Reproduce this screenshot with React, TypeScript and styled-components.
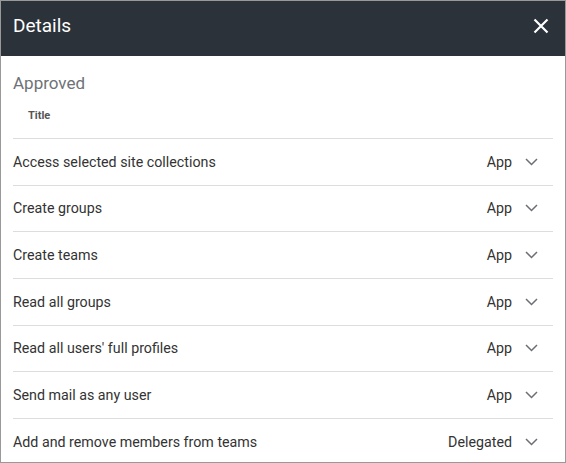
import styled, { createGlobalStyle } from "styled-components";

interface Permission {
  title: string;
  type: string;
}

const permissions: Permission[] = [
  { title: "Access selected site collections", type: "App" },
  { title: "Create groups", type: "App" },
  { title: "Create teams", type: "App" },
  { title: "Read all groups", type: "App" },
  { title: "Read all users' full profiles", type: "App" },
  { title: "Send mail as any user", type: "App" },
  { title: "Add and remove members from teams", type: "Delegated" },
];

const GlobalStyle = createGlobalStyle`
  html, body {
    margin: 0;
    padding: 0;
    background: #ffffff;
  }
  body {
    font-family: Roboto, "Liberation Sans", Arial, sans-serif;
  }
`;

const Panel = styled.div({
  width: 566,
  height: 463,
  boxSizing: "border-box",
  border: "1px solid #999999",
  display: "flex",
  flexDirection: "column",
  overflow: "hidden",
  background: "#ffffff",
});

const Header = styled.div({
  height: 55,
  flexShrink: 0,
  background: "#2b3239",
  display: "flex",
  alignItems: "center",
  justifyContent: "space-between",
  padding: "0 12px 0 12px",
});

const HeaderTitle = styled.h1({
  margin: 0,
  color: "#ffffff",
  fontSize: 19,
  fontWeight: 400,
  lineHeight: "24px",
  marginTop: -6,
});

const CloseButton = styled.button({
  border: "none",
  background: "transparent",
  padding: 0,
  width: 24,
  height: 24,
  display: "flex",
  alignItems: "center",
  justifyContent: "center",
  marginTop: -6,
  cursor: "pointer",
});

const Body = styled.div({
  padding: "0 12px",
  display: "flex",
  flexDirection: "column",
});

const SectionTitle = styled.h2({
  margin: "17px 0 0 0",
  fontSize: 17,
  fontWeight: 400,
  lineHeight: "20px",
  color: "#6e7277",
});

const ColumnHeader = styled.div({
  fontSize: 11,
  fontWeight: 700,
  color: "#555555",
  padding: "0 0 0 15px",
  height: 44,
  lineHeight: "44px",
  marginTop: 1,
  borderBottom: "1px solid #dddddd",
});

const Row = styled.div({
  height: 45.67,
  display: "flex",
  alignItems: "center",
  borderBottom: "1px solid #dddddd",
  fontSize: 14.25,
  color: "#333333",
  "&:last-of-type": {
    borderBottom: "none",
  },
});

const RowTitle = styled.span({
  flex: 1,
  whiteSpace: "nowrap",
});

const RowType = styled.span({
  marginRight: 13,
});

const Chevron = styled.span({
  width: 13,
  display: "flex",
  alignItems: "center",
  marginRight: 15,
});

const CloseIcon = () => (
  <svg width="16" height="16" viewBox="0 0 16 16">
    <path d="M1.5 1.5 L14.5 14.5 M14.5 1.5 L1.5 14.5" stroke="#ffffff" strokeWidth="2.2" />
  </svg>
);

const ChevronIcon = () => (
  <svg width="13" height="8" viewBox="0 0 13 8">
    <path d="M1 1 L6.5 6.5 L12 1" stroke="#6b6f74" strokeWidth="1.5" fill="none" />
  </svg>
);

export default function App() {
  return (
    <>
      <GlobalStyle />
      <Panel>
        <Header>
          <HeaderTitle>Details</HeaderTitle>
          <CloseButton aria-label="Close">
            <CloseIcon />
          </CloseButton>
        </Header>
        <Body>
          <SectionTitle>Approved</SectionTitle>
          <ColumnHeader>Title</ColumnHeader>
          {permissions.map((p) => (
            <Row key={p.title}>
              <RowTitle>{p.title}</RowTitle>
              <RowType>{p.type}</RowType>
              <Chevron>
                <ChevronIcon />
              </Chevron>
            </Row>
          ))}
        </Body>
      </Panel>
    </>
  );
}
